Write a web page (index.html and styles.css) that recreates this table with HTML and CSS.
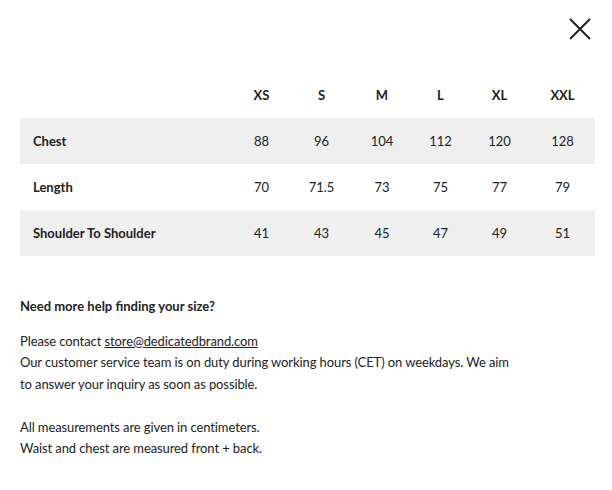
FILE: index.html
```html
<!DOCTYPE html>
<html lang="en">
<head>
<meta charset="utf-8">
<title>Size guide</title>
<link rel="stylesheet" href="styles.css">
</head>
<body>
<div class="modal">
  <div class="top">
    <button class="close" aria-label="Close">
      <svg width="24" height="24" viewBox="0 0 24 24"><path d="M2 2 L22 22 M22 2 L2 22" stroke="#222" stroke-width="2" fill="none"/></svg>
    </button>
  </div>
  <div class="table">
    <div class="row head">
      <div class="label"></div><div>XS</div><div>S</div><div>M</div><div>L</div><div>XL</div><div>XXL</div>
    </div>
    <div class="row shade">
      <div class="label">Chest</div><div>88</div><div>96</div><div>104</div><div>112</div><div>120</div><div>128</div>
    </div>
    <div class="row">
      <div class="label">Length</div><div>70</div><div>71.5</div><div>73</div><div>75</div><div>77</div><div>79</div>
    </div>
    <div class="row shade">
      <div class="label">Shoulder To Shoulder</div><div>41</div><div>43</div><div>45</div><div>47</div><div>49</div><div>51</div>
    </div>
  </div>
  <div class="info">
    <h3>Need more help finding your size?</h3>
    <p>Please contact <a href="#">store@dedicatedbrand.com</a><br>Our customer service team is on duty during working hours (CET) on weekdays. We aim to answer your inquiry as soon as possible.<br><br>All measurements are given in centimeters.<br>Waist and chest are measured front + back.</p>
  </div>
</div>
</body>
</html>
```
FILE: styles.css
```css
html, body {
  margin: 0;
  padding: 0;
  background: #fff;
}
body {
  font-family: Lato, "Liberation Sans", sans-serif;
  font-size: 13px;
  color: #222;
}
.modal {
  padding: 0 17px 0 20px;
}
.top {
  height: 72px;
  display: flex;
  justify-content: flex-end;
  align-items: flex-start;
}
.close {
  margin-top: 17px;
  margin-right: 3px;
  background: none;
  border: 0;
  padding: 0;
  width: 24px;
  height: 24px;
  cursor: pointer;
}
.close svg { display: block; }
.table {
  display: flex;
  flex-direction: column;
}
.row {
  display: grid;
  grid-template-columns: 212px 59px 61px 60px 57px 61px 65px;
  height: 46px;
  align-items: center;
  text-align: center;
}
.row .label {
  text-align: left;
  padding-left: 13px;
  font-weight: 700;
}
.head {
  font-weight: 700;
}
.shade {
  background: #efefef;
}
.info {
  margin-top: 40px;
  line-height: 21.5px;
}
.info h3 {
  margin: 0 0 13px;
  font-size: 13px;
  font-weight: 700;
}
.info p {
  margin: 0;
  max-width: 495px;
  letter-spacing: -0.1px;
}
.info a {
  color: #222;
  text-decoration: underline;
}
```
